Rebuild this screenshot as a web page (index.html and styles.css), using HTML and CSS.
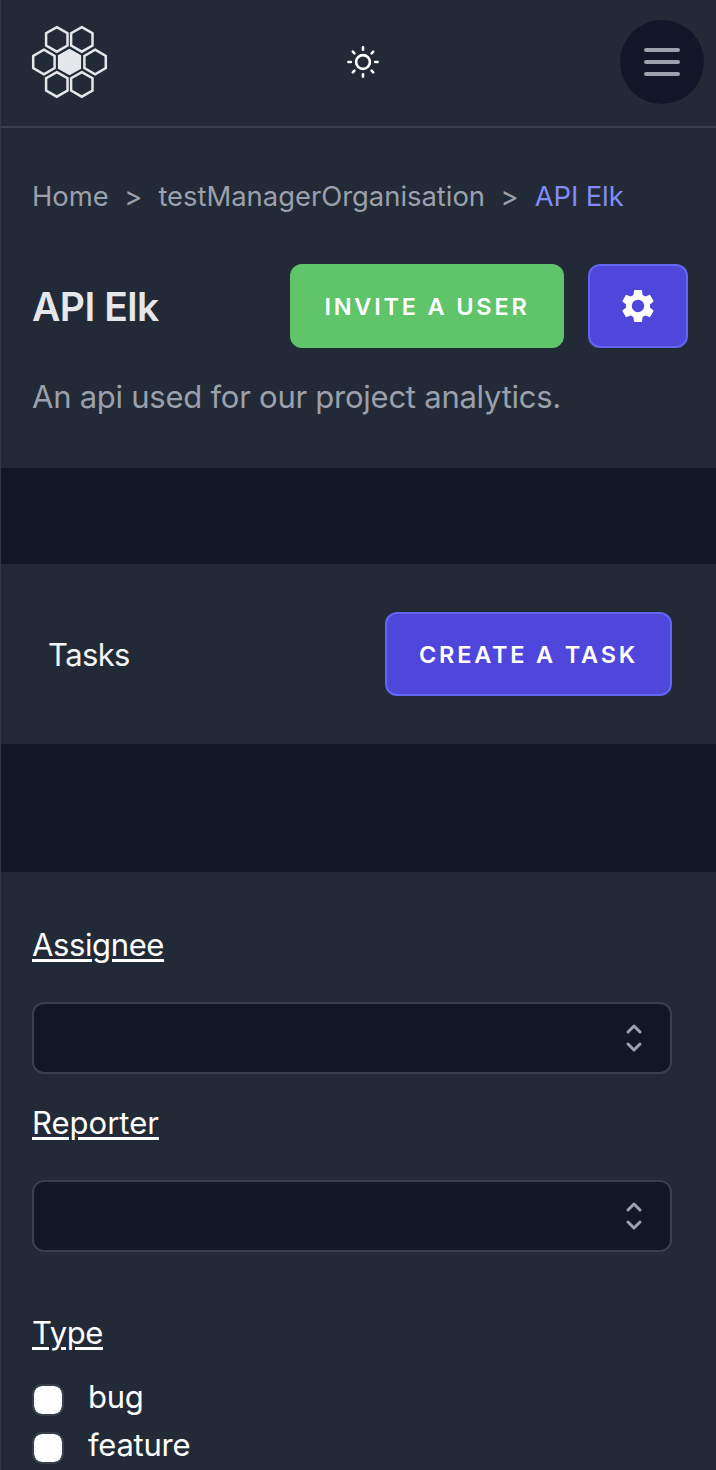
FILE: index.html
```html
<!DOCTYPE html>
<html lang="en">
<head>
<meta charset="utf-8">
<title>API Elk</title>
<link rel="stylesheet" href="styles.css">
</head>
<body>
<div class="page">
  <header class="topbar">
    <svg class="logo" viewBox="31 25 77 74" aria-label="Logo">
      <defs><polygon id="hex" points="0,-12.3 10.7,-6.15 10.7,6.15 0,12.3 -10.7,6.15 -10.7,-6.15"/></defs>
      <g fill="none" stroke="#e5e7eb" stroke-width="2.5">
        <use href="#hex" x="56.8" y="39.4"/><use href="#hex" x="81.8" y="39.4"/>
        <use href="#hex" x="43.9" y="62"/><use href="#hex" x="95.1" y="62"/>
        <use href="#hex" x="56.8" y="84.4"/><use href="#hex" x="81.8" y="84.4"/>
        <use href="#hex" x="69.5" y="62" fill="#e5e7eb" stroke-width="1.8"/>
      </g>
    </svg>
    <svg class="sun" viewBox="-18 -18 36 36">
      <circle r="6.9"/>
      <path d="M0-14.6v2.4M0 12.2v2.4M-14.6 0h2.4M12.2 0h2.4M-10.2-10.3l1.6 1.6M10.2-10.3l-1.6 1.6M-10.2 10.3l1.6-1.6M10.2 10.3l-1.6-1.6"/>
    </svg>
    <button class="menu" aria-label="Menu">
      <svg viewBox="0 0 48 48"><path d="M8 12h32M8 24h32M8 36h32"/></svg>
    </button>
  </header>

  <section class="project">
    <nav class="crumbs">
      <span class="home">Home</span><span class="sep">&gt;</span><span class="org">testManagerOrganisation</span><span class="sep">&gt;</span><span class="current">API Elk</span>
    </nav>
    <div class="title-row">
      <h1>API Elk</h1>
      <div class="actions">
        <button class="btn invite">INVITE A USER</button>
        <button class="btn settings" aria-label="Settings">
          <svg viewBox="0 0 24 24"><path d="M19.14 12.94c.04-.3.06-.61.06-.94 0-.32-.02-.64-.07-.94l2.03-1.58c.18-.14.23-.41.12-.61l-1.92-3.32c-.12-.22-.37-.29-.59-.22l-2.39.96c-.5-.38-1.03-.7-1.62-.94l-.36-2.54c-.04-.24-.24-.41-.48-.41h-3.84c-.24 0-.43.17-.47.41l-.36 2.54c-.59.24-1.13.57-1.62.94l-2.39-.96c-.22-.08-.47 0-.59.22L2.74 8.87c-.12.21-.08.47.12.61l2.03 1.58c-.05.3-.09.63-.09.94s.02.64.07.94l-2.03 1.58c-.18.14-.23.41-.12.61l1.92 3.32c.12.22.37.29.59.22l2.39-.96c.5.38 1.03.7 1.62.94l.36 2.54c.05.24.24.41.48.41h3.84c.24 0 .44-.17.47-.41l.36-2.54c.59-.24 1.13-.56 1.62-.94l2.39.96c.22.08.47 0 .59-.22l1.92-3.32c.12-.22.07-.47-.12-.61l-2.01-1.58zM12 15.7c-2.04 0-3.7-1.66-3.7-3.7s1.66-3.7 3.7-3.7 3.7 1.66 3.7 3.7-1.66 3.7-3.7 3.7z"/></svg>
        </button>
      </div>
    </div>
    <p class="description">An api used for our project analytics.</p>
  </section>

  <section class="tasks">
    <h2>Tasks</h2>
    <button class="btn create">CREATE A TASK</button>
  </section>

  <section class="filters">
    <label class="label assignee">Assignee</label>
    <div class="select"><svg viewBox="0 0 20 20"><path d="M7 7l3-3 3 3m0 6l-3 3-3-3"/></svg></div>
    <label class="label reporter">Reporter</label>
    <div class="select"><svg viewBox="0 0 20 20"><path d="M7 7l3-3 3 3m0 6l-3 3-3-3"/></svg></div>
    <div class="label type">Type</div>
    <div class="option bug"><i class="box"></i><span>bug</span></div>
    <div class="option feature"><i class="box"></i><span>feature</span></div>
  </section>
</div>
</body>
</html>
```

FILE: styles.css
```css
* { box-sizing: border-box; margin: 0; }
html, body { height: 1470px; overflow: hidden; }
body { background: #111725; font-family: Inter, "Liberation Sans", sans-serif; font-size: 31px; line-height: 48px; letter-spacing: -0.25px; color: #fff; }
button { font: inherit; color: inherit; border: 0; padding: 0; }
svg { display: block; }
.page { height: 1470px; border-left: 1px solid #303845; overflow: hidden; white-space: nowrap; }
.topbar { height: 128px; background: #212a36; border-bottom: 2px solid #383f4d; display: flex; align-items: center; justify-content: space-between; padding: 0 12px 2px 30px; }
.logo { width: 77px; height: 74px; }
.sun { width: 36px; height: 36px; margin-right: 3px; fill: none; stroke: #fff; stroke-width: 2.6; stroke-linecap: round; }
.menu { width: 84px; height: 84px; border-radius: 50%; background: #111629; display: grid; place-items: center; }
.menu svg { width: 48px; height: 48px; fill: none; stroke: #9ca3af; stroke-width: 4; stroke-linecap: round; }
.project { height: 340px; background: #212a36; padding: 48px 28px 0 31px; }
.crumbs { display: flex; height: 40px; line-height: 40px; font-size: 27.4px; letter-spacing: 0; color: #9ca0ac; }
.sep { margin: 0 16px 0 15.5px; }
.current { color: #818cf8; letter-spacing: -0.1px; }
.title-row { display: flex; justify-content: space-between; align-items: center; margin-top: 48px; height: 84px; }
h1 { font-size: 39px; font-weight: 600; letter-spacing: -0.5px; color: #e5e7eb; padding-top: 2px; }
.actions { display: flex; gap: 24px; }
.btn { height: 84px; border-radius: 12px; font-size: 23.5px; font-weight: 600; letter-spacing: 2.8px; border: 2px solid #6366f1; background: #4f46dc; padding: 2px 0 0; }
.invite { width: 274px; background: #60c46a; border-color: #60c46a; }
.settings { width: 100px; display: grid; place-items: center; padding: 0; }
.settings svg { width: 40px; height: 40px; fill: #fff; }
.description { margin-top: 25px; color: #9ca0ac; }
.tasks { margin-top: 96px; height: 180px; background: #212a36; display: flex; justify-content: space-between; align-items: center; padding: 0 44px 0 47px; }
h2 { font-size: 31px; font-weight: 400; letter-spacing: -0.6px; color: #f3f4f6; padding-top: 1px; }
.create { width: 287px; }
.filters { margin-top: 128px; height: 598px; background: #212a36; padding: 49px 44px 0 31px; }
.label { display: block; width: max-content; letter-spacing: -0.38px; text-decoration: underline; text-decoration-thickness: 3px; text-underline-offset: 3px; }
.select { height: 72px; border: 2px solid #383f4d; border-radius: 12px; background: #111725; display: flex; justify-content: flex-end; align-items: center; padding-right: 16px; margin-top: 33px; }
.select svg { width: 40px; height: 40px; fill: none; stroke: #9ca3af; stroke-width: 1.5; stroke-linecap: round; stroke-linejoin: round; }
.reporter { margin-top: 25px; letter-spacing: 0; }
.type { margin-top: 57px; }
.option { display: flex; align-items: center; gap: 24px; height: 48px; }
.bug { margin-top: 16px; }
.box { width: 32px; height: 32px; border: 2px solid #383f4d; border-radius: 10px; background: #fff; background-clip: padding-box; position: relative; top: 3px; }
```
